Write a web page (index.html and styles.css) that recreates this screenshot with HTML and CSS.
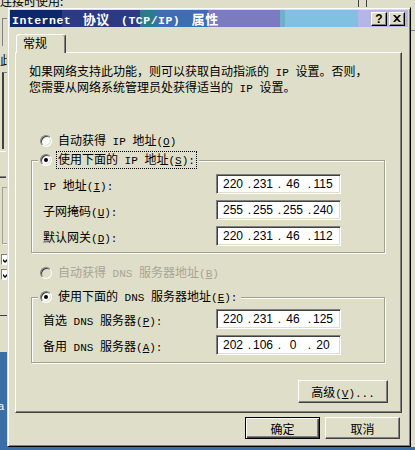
FILE: index.html
```html
<!DOCTYPE html>
<html lang="zh-CN">
<head>
    <meta charset="UTF-8">
    <meta name="viewport" content="width=device-width, initial-scale=1.0">
    <title>Internet 协议 (TCP/IP) 属性</title>
    <link rel="stylesheet" href="styles.css">
</head>
<body>
    <div class="desktop">
        <!-- 后面的“本地连接 属性”窗口，只露出边缘 -->
        <div class="backwin">
            <span class="bw-text bw-using">连接时使用:</span>
            <span class="bw-top-line l1"></span>
            <span class="bw-top-line l2"></span>
            <span class="bw-edit"></span>
            <span class="bw-text bw-items">此连接使用下列项目:</span>
            <span class="bw-list"></span>
            <span class="bw-btn"></span>
            <span class="bw-desc"></span>
            <span class="bw-check c1"><svg width="7" height="7" viewBox="0 0 7 7"><path d="M0 3l2 2 5-5v2l-5 5-2-2z" fill="#000"/></svg></span>
            <span class="bw-check c2"><svg width="7" height="7" viewBox="0 0 7 7"><path d="M0 3l2 2 5-5v2l-5 5-2-2z" fill="#000"/></svg></span>
            <span class="bw-sep"></span>
            <span class="bw-right-sep"></span>
            <span class="bw-sel"><span class="bw-sel-text">a</span></span>
        </div>

        <div class="dialog">
            <div class="titlebar">
                <span class="title"><span class="en">Internet </span>协议<span class="en"> (TCP/IP) </span>属性</span>
                <div class="caption-btns">
                    <span class="cbtn help">?</span>
                    <span class="cbtn close">
                        <svg width="8" height="7" viewBox="0 0 8 7"><path d="M0 0h2l2 2 2-2h2L5 3.5 8 7H6L4 5 2 7H0l3-3.5z" fill="#000"/></svg>
                    </span>
                </div>
            </div>

            <div class="tabs">
                <div class="tab">常规</div>
            </div>

            <div class="panel">
                <p class="intro">如果网络支持此功能，则可以获取自动指派的<span class="en"> IP </span>设置。否则，<br>您需要从网络系统管理员处获得适当的<span class="en"> IP </span>设置。</p>

                <div class="radio-row opt opt-ip">
                    <span class="radio"></span>
                    <span class="rlabel">自动获得<span class="en"> IP </span>地址<span class="en">(<u>O</u>)</span></span>
                </div>

                <fieldset class="group group-ip">
                    <legend class="radio-row">
                        <span class="radio checked"></span>
                        <span class="rlabel focus">使用下面的<span class="en"> IP </span>地址<span class="en">(<u>S</u>):</span></span>
                    </legend>
                    <div class="field-row">
                        <label><span class="en">IP </span>地址<span class="en">(<u>I</u>):</span></label>
                        <div class="ipbox"><span class="oct">220</span><span class="dot">.</span><span class="oct">231</span><span class="dot">.</span><span class="oct">46</span><span class="dot">.</span><span class="oct">115</span></div>
                    </div>
                    <div class="field-row">
                        <label>子网掩码<span class="en">(<u>U</u>):</span></label>
                        <div class="ipbox"><span class="oct">255</span><span class="dot">.</span><span class="oct">255</span><span class="dot">.</span><span class="oct">255</span><span class="dot">.</span><span class="oct">240</span></div>
                    </div>
                    <div class="field-row">
                        <label>默认网关<span class="en">(<u>D</u>):</span></label>
                        <div class="ipbox"><span class="oct">220</span><span class="dot">.</span><span class="oct">231</span><span class="dot">.</span><span class="oct">46</span><span class="dot">.</span><span class="oct">112</span></div>
                    </div>
                </fieldset>

                <div class="radio-row opt opt-dns disabled">
                    <span class="radio"></span>
                    <span class="rlabel">自动获得<span class="en"> DNS </span>服务器地址<span class="en">(<u>B</u>)</span></span>
                </div>

                <fieldset class="group group-dns">
                    <legend class="radio-row">
                        <span class="radio checked"></span>
                        <span class="rlabel">使用下面的<span class="en"> DNS </span>服务器地址<span class="en">(<u>E</u>):</span></span>
                    </legend>
                    <div class="field-row">
                        <label>首选<span class="en"> DNS </span>服务器<span class="en">(<u>P</u>):</span></label>
                        <div class="ipbox"><span class="oct">220</span><span class="dot">.</span><span class="oct">231</span><span class="dot">.</span><span class="oct">46</span><span class="dot">.</span><span class="oct">125</span></div>
                    </div>
                    <div class="field-row">
                        <label>备用<span class="en"> DNS </span>服务器<span class="en">(<u>A</u>):</span></label>
                        <div class="ipbox"><span class="oct">202</span><span class="dot">.</span><span class="oct">106</span><span class="dot">.</span><span class="oct">0</span><span class="dot">.</span><span class="oct">20</span></div>
                    </div>
                </fieldset>

                <div class="adv-row">
                    <button class="btn adv">高级<span class="en">(<u>V</u>)...</span></button>
                </div>
            </div>

            <div class="footer">
                <button class="btn default">确定</button>
                <button class="btn">取消</button>
            </div>
        </div>
    </div>
</body>
</html>
```

FILE: styles.css
```css
body {
    margin: 0;
    font-family: "Noto Sans CJK SC", sans-serif;
    font-size: 12px;
    color: #000;
    overflow: hidden;
}
.desktop {
    position: relative;
    width: 415px;
    height: 450px;
    background-color: #3a6ea5;
    overflow: hidden;
}
.en {
    font-family: "Liberation Mono", monospace;
    font-size: 11px;
}
u {
    text-underline-offset: 1px;
}

/* background window */
.backwin {
    position: absolute;
    left: 0;
    top: 0;
    width: 415px;
    height: 447px;
    background-color: #dfdec8;
    overflow: hidden;
}
.backwin > span {
    position: absolute;
}
.bw-text {
    line-height: 14px;
    white-space: nowrap;
}
.bw-using {
    left: 0;
    top: -6px;
}
.bw-items {
    left: 0;
    top: 53px;
}
.bw-top-line {
    top: 0;
    width: 1px;
    height: 8px;
    background-color: #404040;
}
.bw-top-line.l1 {
    left: 358px;
}
.bw-top-line.l2 {
    left: 366px;
}
.bw-edit {
    left: 2px;
    top: 18px;
    width: 60px;
    height: 27px;
    border-left: 1px solid #808080;
    border-top: 1px solid #808080;
}
.bw-list {
    left: 2px;
    top: 72px;
    width: 60px;
    height: 76px;
    border-left: 2px solid #404040;
    border-top: 1px solid #808080;
}
.bw-btn {
    left: -60px;
    top: 151px;
    width: 66px;
    height: 25px;
    border-top: 1px solid #fff;
    border-bottom: 1px solid #404040;
    box-shadow: inset 0 -1px #808080;
}
.bw-desc {
    left: 2px;
    top: 187px;
    width: 60px;
    height: 55px;
    border: 1px solid #a2a08e;
    box-shadow: 1px 1px #fff;
}
.bw-check {
    left: 1px;
    width: 11px;
    height: 11px;
    box-sizing: border-box;
    background-color: #fff;
    border: 1px solid;
    border-color: #808080 #fff #fff #808080;
    display: flex;
    align-items: center;
    justify-content: center;
}
.bw-check.c1 {
    top: 254px;
}
.bw-check.c2 {
    top: 269px;
}
.bw-sep {
    left: 0;
    top: 315px;
    width: 7px;
    height: 1px;
    background-color: #404040;
}
.bw-right-sep {
    left: 410px;
    top: 30px;
    width: 5px;
    height: 1px;
    background-color: #808080;
}
.bw-sel {
    left: 0;
    top: 352px;
    width: 7px;
    height: 95px;
    background-color: #3a6ea5;
}
.bw-sel-text {
    position: absolute;
    left: -2px;
    top: 48px;
    color: #fff;
    font-family: "Liberation Sans", sans-serif;
    font-size: 11px;
}

/* dialog frame */
.dialog {
    position: absolute;
    left: 7px;
    top: 7px;
    width: 404px;
    height: 440px;
    box-sizing: border-box;
    padding: 2px;
    background-color: #dfdec8;
    border: 1px solid;
    border-color: #dfdec8 #000 #000 #dfdec8;
    box-shadow: inset 1px 1px #fff, inset -1px -1px #808080;
}
.titlebar {
    display: flex;
    align-items: center;
    height: 17px;
    padding: 0 3px 0 2px;
    color: #fff;
    font-weight: bold;
    background: linear-gradient(to right,
        #0c2868 0 13%, #2c3a82 13% 32.7%, #2f7a88 32.7% 36.4%,
        #3e6db0 36.4% 49.7%, #7b7cbf 49.7% 67.8%, #6fb2c6 67.8% 69.1%,
        #82c0e2 69.1% 87.4%, #b6b6e6 87.4%);
}
.title {
    font-size: 13px;
    letter-spacing: 0.5px;
    word-spacing: 4px;
    white-space: nowrap;
}
.title .en {
    font-size: 11.5px;
}
.caption-btns {
    margin-left: auto;
    display: flex;
    gap: 2px;
}
.cbtn {
    width: 16px;
    height: 14px;
    box-sizing: border-box;
    display: flex;
    align-items: center;
    justify-content: center;
    background-color: #dfdec8;
    border: 1px solid;
    border-color: #fff #000 #000 #fff;
    box-shadow: inset -1px -1px #808080;
    color: #000;
}
.cbtn.help {
    font-family: "Liberation Sans", sans-serif;
    font-size: 12px;
    font-weight: bold;
    line-height: 12px;
}

/* tab */
.tabs {
    display: flex;
    margin-top: 7px;
    padding-left: 6px;
}
.tab {
    position: relative;
    z-index: 1;
    width: 50px;
    height: 19px;
    box-sizing: border-box;
    margin-bottom: -1px;
    padding-left: 6px;
    line-height: 15px;
    background-color: #dfdec8;
    border: 1px solid;
    border-bottom: none;
    border-color: #fff #404040 transparent #fff;
    border-radius: 3px 3px 0 0;
    box-shadow: inset -1px 0 #808080;
}
.panel {
    height: 361px;
    box-sizing: border-box;
    margin: 0 6px 0 5px;
    padding: 11px 13px 0 13px;
    border: 1px solid;
    border-color: #fff #404040 #404040 #fff;
    box-shadow: inset -1px -1px #808080;
}
.intro {
    margin: 0;
    line-height: 13px;
    white-space: nowrap;
}

/* radio buttons */
.radio-row {
    display: flex;
    align-items: center;
    gap: 4px;
    height: 16px;
    white-space: nowrap;
}
.opt {
    padding-left: 11px;
}
.opt-ip {
    margin-top: 37px;
}
.opt-dns {
    margin-top: 12px;
}
.radio {
    position: relative;
    width: 12px;
    height: 12px;
    box-sizing: border-box;
    border-radius: 50%;
    background-color: #fff;
    border: 1px solid;
    border-color: #808080 #fff #fff #808080;
    box-shadow: inset 1px 1px #404040, inset -1px -1px #dfdec8;
}
.radio.checked::after {
    content: "";
    position: absolute;
    left: 3px;
    top: 3px;
    width: 4px;
    height: 4px;
    border-radius: 50%;
    background-color: #000;
}
.rlabel {
    line-height: 14px;
    padding: 0 1px;
    border: 1px solid transparent;
}
.rlabel.focus {
    border: 1px dotted #000;
}
.disabled {
    color: #a7a596;
}
.disabled .radio {
    background-color: #dfdec8;
}

/* group boxes */
.group {
    margin: 0 3px 0 2px;
    min-width: 0;
    border: 1px solid #a2a08e;
    box-shadow: inset 1px 1px #fff, 1px 1px #fff;
}
.group legend {
    margin-left: -5px;
    padding: 0 2px;
    background-color: #dfdec8;
}
.group-ip {
    margin-top: 3px;
    padding: 6px 0 6px 11px;
}
.group-dns {
    margin-top: 8px;
    padding: 4px 0 7px 11px;
}
.field-row {
    display: grid;
    grid-template-columns: 173px 125px;
    align-items: center;
    height: 20px;
    white-space: nowrap;
}
.field-row + .field-row {
    margin-top: 6px;
}
.ipbox {
    display: flex;
    height: 20px;
    box-sizing: border-box;
    padding-left: 4px;
    background-color: #fff;
    border: 1px solid;
    border-color: #808080 #fff #fff #808080;
    box-shadow: inset 1px 1px #404040, inset -1px -1px #dfdec8;
    font-family: "Liberation Sans", sans-serif;
    font-size: 12px;
    line-height: 18px;
}
.oct {
    width: 24px;
    text-align: center;
}
.dot {
    width: 6px;
    text-align: right;
}

/* buttons */
.btn {
    font: inherit;
    color: #000;
    padding: 0;
    background-color: #dfdec8;
    box-sizing: border-box;
    border: 1px solid;
    border-color: #fff #404040 #404040 #fff;
    box-shadow: inset -1px -1px #808080;
}
.btn.default {
    border-color: #000;
    box-shadow: inset 1px 1px #fff, inset -1px -1px #404040, inset -2px -2px #808080;
}
.adv-row {
    display: flex;
    justify-content: flex-end;
    margin-top: 17px;
}
.btn.adv {
    width: 90px;
    height: 23px;
}
.footer {
    display: flex;
    justify-content: flex-end;
    gap: 5px;
    margin-top: 4px;
    padding-right: 8px;
}
.footer .btn {
    width: 75px;
    height: 22px;
}
```
